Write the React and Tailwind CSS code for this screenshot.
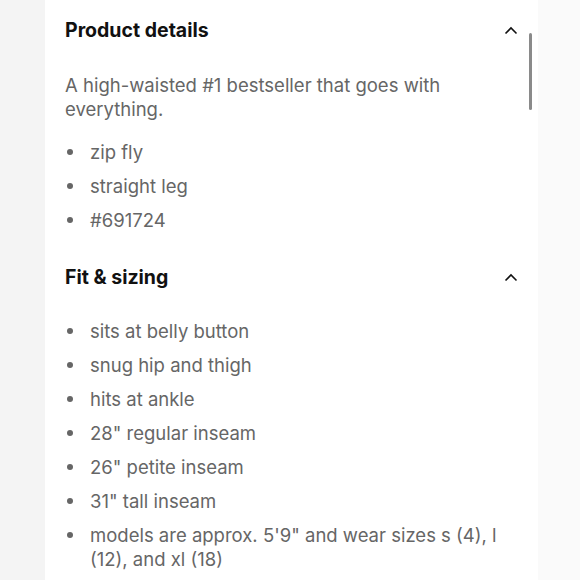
import React from 'react';

const font = { fontFamily: 'Inter, "Noto Sans", sans-serif' };

const Chevron = () => (
  <svg width="14" height="9" viewBox="0 0 14 9" fill="none" className="mr-[20px]">
    <path d="M1.5 7.5 L7 2 L12.5 7.5" stroke="#111" strokeWidth="1.6" />
  </svg>
);

const Bullet = ({ children }) => (
  <li className="flex items-start">
    <span className="w-[25px] shrink-0 flex justify-start pl-[2px] h-[24px] items-center">
      <span className="w-[6px] h-[6px] rounded-full bg-[#666]" />
    </span>
    <span className="pr-[34px]">{children}</span>
  </li>
);

const Heading = ({ children }) => (
  <div className="flex items-center justify-between h-[28px] pt-[2px]">
    <h2 className="text-[19.5px] font-bold text-[#111]">{children}</h2>
    <Chevron />
  </div>
);

export default function App() {
  const fit = [
    'sits at belly button',
    'snug hip and thigh',
    'hits at ankle',
    '28" regular inseam',
    '26" petite inseam',
    '31" tall inseam',
    'models are approx. 5\'9" and wear sizes s (4), l (12), and xl (18)',
  ];

  return (
    <div className="flex w-[580px] h-[580px] overflow-hidden bg-[#f9f9f9]" style={font}>
      <div className="w-[45px] bg-[#f4f4f4]" />
      <div className="relative w-[493px] bg-white pl-[20px] pt-[15px] text-[18.5px] leading-[24px] text-[#666]">
        <Heading>Product details</Heading>
        <p className="mt-[30px] pr-[60px]">A high-waisted #1 bestseller that goes with everything.</p>
        <ul className="mt-[19px] flex flex-col gap-[10px]">
          <Bullet>zip fly</Bullet>
          <Bullet>straight leg</Bullet>
          <Bullet>#691724</Bullet>
        </ul>

        <div className="mt-[30px]">
          <Heading>Fit &amp; sizing</Heading>
        </div>
        <ul className="mt-[29px] flex flex-col gap-[10px]">
          {fit.map((t) => (
            <Bullet key={t}>{t}</Bullet>
          ))}
        </ul>

        <div className="absolute left-[484px] top-[33px] w-[3px] h-[77px] rounded-full bg-[#8a8a8a]" />
      </div>
      <div className="flex-1 bg-[#fafafa]" />
    </div>
  );
}
